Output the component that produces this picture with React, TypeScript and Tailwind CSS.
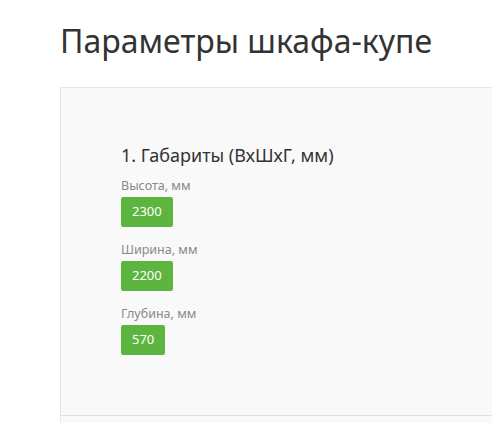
import React from "react";

const fields = [
  { label: "Высота, мм", value: "2300" },
  { label: "Ширина, мм", value: "2200" },
  { label: "Глубина, мм", value: "570" },
];

export default function App() {
  return (
    <div className="w-[492px] h-[423px] overflow-hidden bg-white" style={{ fontFamily: '"Noto Sans", "Open Sans", sans-serif' }}>
      <div className="pl-[60px] pt-[20px]">
        <h1 className="text-[32px] leading-[42px] text-[#333] font-normal whitespace-nowrap">Параметры шкафа-купе</h1>
        <div className="mt-[25px] w-[600px] border border-[#e6e6e6] bg-[#f9f9f9]">
          <div className="pl-[60px] pt-[54px] pb-[60px]">
            <div className="text-[18px] leading-[26px] text-[#333]">1. Габариты (ВхШхГ, мм)</div>
            <div className="mt-[9px] flex flex-col gap-[14px]">
              {fields.map((f) => (
                <div key={f.label} className="flex flex-col items-start">
                  <div className="text-[12.5px] leading-[17px] text-[#888] mb-[3px]">{f.label}</div>
                  <div className="h-[30px] px-[11px] rounded-[2px] bg-[#5cb53f] text-white text-[13px] flex items-center">{f.value}</div>
                </div>
              ))}
            </div>
          </div>
          <div className="border-t border-[#e0e0e0] h-[20px]"></div>
        </div>
      </div>
    </div>
  );
}
